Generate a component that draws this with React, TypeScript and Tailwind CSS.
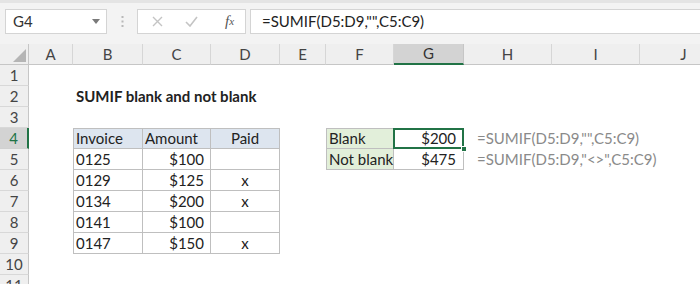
import React from "react";

const cols = ["A", "B", "C", "D", "E", "F", "G", "H", "I", "J"];

type Cell = {
  text?: string;
  cls?: string;
};

// cells keyed by "col+row", e.g. "B4"
const bx = "border-r border-b border-[#bfbfbf]";
const cells: Record<string, Cell> = {
  B2: { text: "SUMIF blank and not blank", cls: "font-bold pl-[3px]" },
  B4: { text: "Invoice", cls: `${bx} border-t border-l bg-[#dde5ef] pl-[2px]` },
  C4: { text: "Amount", cls: `${bx} border-t bg-[#dde5ef] pl-[2px]` },
  D4: { text: "Paid", cls: `${bx} border-t bg-[#dde5ef] justify-center` },
  F4: { text: "Blank", cls: `${bx} border-t border-l bg-[#e2efda] pl-[2px]` },
  G4: { text: "$200", cls: `${bx} border-t justify-end pr-[7px]` },
  H4: { text: '=SUMIF(D5:D9,"",C5:C9)', cls: "pl-[13px] text-[#8a8a8a]" },
  F5: { text: "Not blank", cls: `${bx} border-l bg-[#e2efda] pl-[2px]` },
  G5: { text: "$475", cls: `${bx} justify-end pr-[7px]` },
  H5: { text: '=SUMIF(D5:D9,"<>",C5:C9)', cls: "pl-[13px] text-[#8a8a8a]" },
};

const invoices = [
  ["0125", "$100", ""],
  ["0129", "$125", "x"],
  ["0134", "$200", "x"],
  ["0141", "$100", ""],
  ["0147", "$150", "x"],
];
invoices.forEach(([inv, amt, paid], i) => {
  const r = i + 5;
  cells[`B${r}`] = { text: inv, cls: `${bx} border-l pl-[2px]` };
  cells[`C${r}`] = { text: amt, cls: `${bx} justify-end pr-[6px]` };
  cells[`D${r}`] = { text: paid, cls: `${bx} justify-center` };
});

function FormulaBar() {
  return (
    <div className="h-[44px] bg-[#f3f3f3] relative flex items-start pt-[9px] pl-[5px] border-t-[3px] border-[#e4e4e4]">
      <div className="w-[102px] h-[25px] bg-white border border-[#d4d4d4] flex items-center justify-between pl-[7px] pr-[6px] text-[15px] text-[#333] mt-[-3px]">
        <span>G4</span>
        <svg width="8" height="5" viewBox="0 0 8 5">
          <path d="M0 0h8L4 5z" fill="#7a7a7a" />
        </svg>
      </div>
      <div className="w-[30px] h-[25px] flex items-center justify-center mt-[-3px]">
        <svg width="3" height="11" viewBox="0 0 3 11">
          <rect x="0.5" y="0" width="2" height="2" fill="#b8b8b8" />
          <rect x="0.5" y="4.5" width="2" height="2" fill="#b8b8b8" />
          <rect x="0.5" y="9" width="2" height="2" fill="#b8b8b8" />
        </svg>
      </div>
      <div className="w-[109px] h-[25px] bg-white border border-[#d4d4d4] flex items-center mt-[-3px]">
        <div className="w-[36px] flex justify-center pl-[2px]">
          <svg width="11" height="11" viewBox="0 0 11 11">
            <path d="M1 1l9 9M10 1l-9 9" stroke="#c4c4c4" strokeWidth="1.4" />
          </svg>
        </div>
        <div className="w-[34px] flex justify-center">
          <svg width="13" height="11" viewBox="0 0 13 11">
            <path d="M1 6l4 4 7-9" stroke="#c4c4c4" strokeWidth="1.6" fill="none" />
          </svg>
        </div>
        <div className="flex-1 flex justify-center pl-[6px] font-['Liberation_Serif',serif] italic text-[15px] text-[#555]">
          f<span className="text-[11px] mt-[3px]">x</span>
        </div>
      </div>
      <div className="ml-[4px] flex-1 h-[25px] bg-white border border-[#d4d4d4] border-r-0 flex items-center pl-[11px] text-[15px] text-[#222] mt-[-3px]">
        =SUMIF(D5:D9,"",C5:C9)
      </div>
    </div>
  );
}

function Sheet() {
  const rows = Array.from({ length: 11 }, (_, i) => i + 1);
  return (
    <div className="grid grid-cols-[29px_44px_70px_68px_69px_46px_68px_70px_88px_88px_88px] auto-rows-[21px] text-[15px] text-[#222] bg-white">
      {/* header row */}
      <div className="bg-[#efefef] border-r border-b border-[#c6c6c6] relative">
        <svg className="absolute left-[13px] top-[5px]" width="13" height="13" viewBox="0 0 13 13">
          <path d="M13 0v13H0z" fill="#b5b5b5" />
        </svg>
      </div>
      {cols.map((c) => (
        <div
          key={c}
          className={
            c === "G"
              ? "bg-[#d3d3d3] border-r border-[#c6c6c6] border-b-2 border-b-[#217346] flex items-center justify-center text-[#333]"
              : "bg-[#efefef] border-r border-b border-[#d6d6d6] border-b-[#c6c6c6] flex items-center justify-center text-[#444]"
          }
        >
          {c}
        </div>
      ))}
      {rows.map((r) => (
        <React.Fragment key={r}>
          <div
            className={
              r === 4
                ? "bg-[#d3d3d3] border-b border-[#d0d0d0] border-r-2 border-r-[#217346] flex items-center justify-center text-[#217346]"
                : "bg-[#efefef] border-b border-[#d8d8d8] border-r border-r-[#c6c6c6] flex items-center justify-center text-[#444]"
            }
          >
            {r}
          </div>
          {cols.map((c) => {
            const cell = cells[`${c}${r}`];
            const sel = c === "G" && r === 4;
            return (
              <div
                key={c}
                className={`flex items-center whitespace-nowrap overflow-visible ${sel ? "relative" : ""} ${cell?.cls ?? ""}`}
              >
                {cell?.text}
                {sel && (
                  <>
                    <div className="absolute left-[-1px] top-[-1px] right-[-1px] bottom-[-1px] border-2 border-[#217346]" />
                    <div className="absolute right-[-4px] bottom-[-4px] w-[6px] h-[6px] bg-[#217346] border border-white" />
                  </>
                )}
              </div>
            );
          })}
        </React.Fragment>
      ))}
    </div>
  );
}

export default function App() {
  return (
    <div className="w-[700px] h-[284px] overflow-hidden bg-white font-['Lato','Noto_Sans',sans-serif]">
      <FormulaBar />
      <Sheet />
    </div>
  );
}
